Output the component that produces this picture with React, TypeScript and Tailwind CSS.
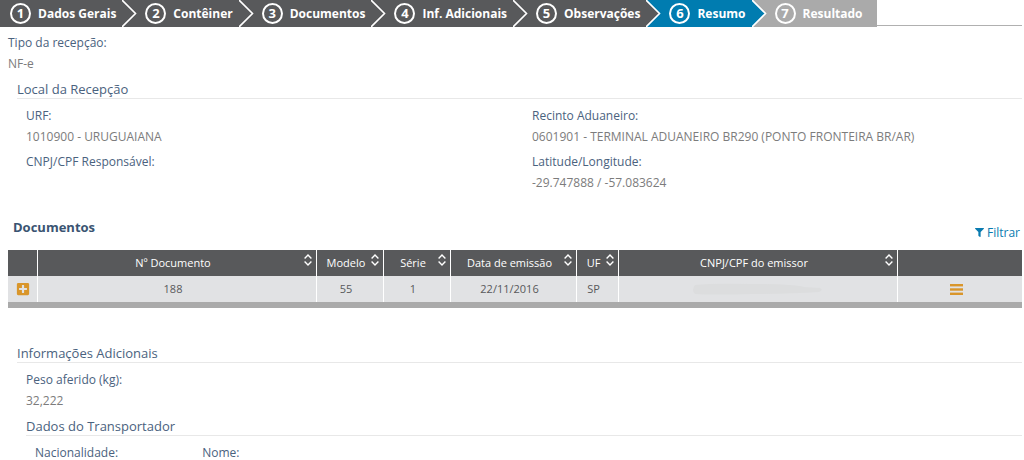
import type { ReactNode } from 'react';
import clsx from 'clsx';
import { FaFilter, FaPlusSquare } from 'react-icons/fa';

type StepState = 'done' | 'current' | 'disabled';

const steps: { label: string; state: StepState }[] = [
  { label: 'Dados Gerais', state: 'done' },
  { label: 'Contêiner', state: 'done' },
  { label: 'Documentos', state: 'done' },
  { label: 'Inf. Adicionais', state: 'done' },
  { label: 'Observações', state: 'done' },
  { label: 'Resumo', state: 'current' },
  { label: 'Resultado', state: 'disabled' },
];

const stepBg = {
  done: 'bg-[#58595b]',
  current: 'bg-[#007cb0]',
  disabled: 'bg-[#aaaaaa]',
};

const stepFill = {
  done: 'fill-[#58595b]',
  current: 'fill-[#007cb0]',
  disabled: 'fill-[#aaaaaa]',
};

function Steps() {
  return (
    <nav aria-label="Etapas" className="flex items-start">
      <ol className="flex shrink-0">
        {steps.map((step, i) => {
          const next = steps[i + 1];
          return (
            <li key={step.label} className="flex">
              <a
                href="#"
                aria-current={step.state === 'current' ? 'step' : undefined}
                className={clsx(
                  'flex h-[27px] items-center gap-[7px] text-xs font-bold text-white',
                  i === 0 ? 'pl-2.5' : 'pl-2',
                  next ? 'pr-1.5' : 'pr-3.5',
                  stepBg[step.state]
                )}
              >
                <span className="flex size-[21px] items-center justify-center rounded-full border-2 border-white text-[13px] leading-none">
                  {i + 1}
                </span>
                {step.label}
              </a>
              {/* Arrow into the next step */}
              {next && (
                <svg width="15" height="27" viewBox="0 0 15 27" className={stepBg[next.state]}>
                  <path d="M-1 -1L13.5 13.5L-1 28Z" className={stepFill[step.state]} />
                  <path d="M-1 -1L13.5 13.5L-1 28" fill="none" stroke="#fff" strokeWidth="1.6" />
                </svg>
              )}
            </li>
          );
        })}
      </ol>
      <div className="h-[26px] flex-1 border-b border-[#b0b0b0]" />
    </nav>
  );
}

function Field({ label, value }: { label: string; value?: string }) {
  return (
    <dl className="text-xs leading-[21px]">
      <dt className="text-[#4a627e]">{label}</dt>
      <dd className="text-[#7c7c7c]">{value}</dd>
    </dl>
  );
}

function Section({ title, children }: { title: string; children: ReactNode }) {
  return (
    <section className="pl-[9px]">
      <h3 className="border-b border-[#e8e8e8] text-[13px] leading-[18px] text-[#4a627e]">{title}</h3>
      <div className="pt-1.5">{children}</div>
    </section>
  );
}

function SortHeader({ children }: { children: ReactNode }) {
  return (
    <th className="border-r border-white p-0 font-normal">
      <button type="button" className="flex w-full items-start px-1 leading-[26px]">
        <span className="flex-1 text-center whitespace-nowrap">{children}</span>
        <svg width="8" height="12" viewBox="0 0 8 12" fill="none" stroke="currentColor" strokeWidth="1.4" className="mt-1 shrink-0">
          <path d="M0.6 4.4L4 1L7.4 4.4" />
          <path d="M0.6 7.6L4 11L7.4 7.6" />
        </svg>
      </button>
    </th>
  );
}

const cell = 'border-r border-white py-0 pr-3 pl-1';

export default function App() {
  return (
    <div className="bg-white pr-0.5 font-['Open_Sans',sans-serif]">
      <Steps />

      <main className="pl-2">
        <div className="pt-[5px]">
          <Field label="Tipo da recepção:" value="NF-e" />
        </div>

        <div className="pt-1.5">
          <Section title="Local da Recepção">
            <div className="grid grid-cols-2 gap-x-4 gap-y-1 pl-[9px]">
              <Field label="URF:" value="1010900 - URUGUAIANA" />
              <Field label="Recinto Aduaneiro:" value="0601901 - TERMINAL ADUANEIRO BR290 (PONTO FRONTEIRA BR/AR)" />
              <Field label="CNPJ/CPF Responsável:" />
              <Field label="Latitude/Longitude:" value="-29.747888 / -57.083624" />
            </div>
          </Section>
        </div>

        <div className="flex h-[57px] items-end justify-between pr-0.5 pl-[5px]">
          <h2 className="mb-3 text-[13px] leading-[21px] font-bold text-[#3a5472]">Documentos</h2>
          <button type="button" className="mb-[7px] flex items-center gap-[3px] text-xs leading-[21px] text-[#0a7bb0]">
            <FaFilter className="size-[9px]" />
            Filtrar
          </button>
        </div>

        <div className="border-b-6 border-[#aaaaaa]">
          <table className="w-full table-fixed border-separate border-spacing-0 text-center text-[11px]">
            <colgroup>
              <col className="w-[30px]" />
              <col />
              <col className="w-[67px]" />
              <col className="w-[67px]" />
              <col className="w-[126px]" />
              <col className="w-[42px]" />
              <col />
              <col className="w-[124px]" />
            </colgroup>
            <thead>
              <tr className="h-[26px] bg-[#58595b] text-white">
                <th className="border-r border-white p-0" />
                <SortHeader>Nº Documento</SortHeader>
                <SortHeader>Modelo</SortHeader>
                <SortHeader>Série</SortHeader>
                <SortHeader>Data de emissão</SortHeader>
                <SortHeader>UF</SortHeader>
                <SortHeader>CNPJ/CPF do emissor</SortHeader>
                <th className="p-0" />
              </tr>
            </thead>
            <tbody>
              <tr className="h-[26px] bg-[#e1e2e4] text-[#58595b]">
                <td className="border-r border-white p-0">
                  <button type="button" aria-label="Expandir" className="mx-auto block text-[#d9962b]">
                    <FaPlusSquare className="size-3.5" />
                  </button>
                </td>
                <td className={cell}>188</td>
                <td className={cell}>55</td>
                <td className={cell}>1</td>
                <td className={cell}>22/11/2016</td>
                <td className={cell}>SP</td>
                <td className="border-r border-white px-2 py-0">
                  {/* Hidden CNPJ */}
                  <svg width="132" height="12" viewBox="0 0 132 12" fill="#dcddde" className="mx-auto block">
                    <path d="M3 2Q20 0 60 1Q100 1 112 4L128 5Q132 7 127 9Q100 11 60 11Q20 12 3 11Q-1 7 3 2Z" />
                  </svg>
                </td>
                <td className="py-0 pr-3 pl-1">
                  <button type="button" aria-label="Ações" className="mx-auto block">
                    <svg width="13" height="11" viewBox="0 0 13 11" fill="#d9962b" className="block">
                      <rect width="13" height="2.4" />
                      <rect y="4.3" width="13" height="2.4" />
                      <rect y="8.6" width="13" height="2.4" />
                    </svg>
                  </button>
                </td>
              </tr>
            </tbody>
          </table>
        </div>

        <div className="pt-9">
          <Section title="Informações Adicionais">
            <div className="pl-[9px]">
              <Field label="Peso aferido (kg):" value="32,222" />
            </div>
            <div className="pt-1.5">
              <Section title="Dados do Transportador">
                <div className="grid grid-cols-6 gap-x-4 pl-[9px]">
                  <Field label="Nacionalidade:" />
                  <Field label="Nome:" />
                </div>
              </Section>
            </div>
          </Section>
        </div>
      </main>
    </div>
  );
}
